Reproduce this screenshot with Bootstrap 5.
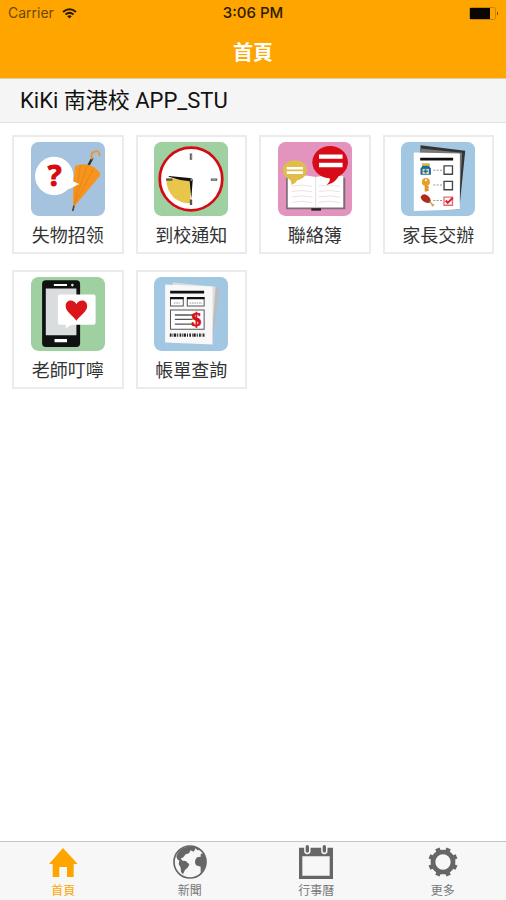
<!DOCTYPE html>
<html lang="zh-Hant">
<head>
<meta charset="utf-8">
<meta name="viewport" content="width=device-width, initial-scale=1">
<title>首頁</title>
<link href="https://cdn.jsdelivr.net/npm/bootstrap@5.3.0/dist/css/bootstrap.min.css" rel="stylesheet">
<style>
  body { font-family: Inter, "Noto Sans CJK TC", sans-serif; background: #fff; color: #111; }
  .app-top { background: #ffa500; border-bottom: 1px solid #e3cda6; }
  .status-bar { height: 26px; font-size: 14px; line-height: 26px; color: #2b1c00; }
  .status-bar .carrier { color: #6b4805; }
  .status-bar .clock-time { font-size: 15px; }
  .status-side { flex: 1 1 0; }
  .page-title { height: 52px; font-size: 20px; line-height: 54px; font-weight: 700; color: #fff; }
  .school-bar { height: 44px; padding: 0 20px; font-size: 22px; line-height: 44px; background: #f5f5f5; border-bottom: 1px solid #e0e0e0; font-family: Roboto, "Noto Sans CJK TC", sans-serif; }
  .tiles { display: grid; grid-template-columns: repeat(4, 1fr); gap: 16px 12px; padding: 12px; }
  .tile { padding-top: 5px; border: 2px solid #ebebeb; color: #333; font-size: 18px; line-height: 32px; }
  .tile svg { width: 74px; height: 74px; margin-bottom: 4px; }
  .tab-bar { background: #f7f7f7; border-top: 1px solid #c4c4c4; }
  .tab-bar a { flex: 1 1 0; padding-top: 3px; color: #777; font-size: 12px; line-height: 18px; }
  .tab-bar a.active { color: #ffa500; }
  .tab-bar svg { width: 34px; height: 34px; margin-bottom: 3px; color: #666; }
  .tab-bar .active svg { color: #ffa500; }
</style>
<script src="https://cdn.jsdelivr.net/npm/bootstrap@5.3.0/dist/js/bootstrap.bundle.min.js"></script>
</head>
<body class="d-flex flex-column min-vh-100">
<header class="app-top">
  <div class="status-bar d-flex align-items-center px-2">
    <div class="status-side d-flex align-items-center gap-2">
      <span class="carrier">Carrier</span>
      <svg width="15" height="11" viewBox="0 0 15 11" fill="none" stroke="#2b1c00" stroke-width="2" aria-hidden="true"><path d="M1 4Q7.500-1.500 14 4M3.500 6.500Q7.500 3.200 11.500 6.500"/><path d="M5.200 8.200Q7.500 6.500 9.800 8.200L7.500 10.500Z" fill="#2b1c00" stroke="none"/></svg>
    </div>
    <span class="clock-time fw-medium">3:06 PM</span>
    <div class="status-side d-flex justify-content-end align-items-center">
      <svg width="30" height="13" viewBox="0 0 30 13" aria-hidden="true"><rect x="1.500" y=".5" width="26" height="12" rx="2" fill="none" stroke="#c98300"/><path d="M2 1h20v11H2z" fill="#0a0600"/><path d="M29 4.500q2 2 0 4z" fill="#5c3b00"/></svg>
    </div>
  </div>
  <h1 class="page-title text-center m-0">首頁</h1>
</header>
<h2 class="school-bar fw-normal m-0">KiKi 南港校 APP_STU</h2>

<main class="flex-grow-1">
  <div class="tiles">
    <a href="#lost" class="tile d-flex flex-column align-items-center text-decoration-none">
      <svg class="flex-shrink-0" viewBox="81 37 220 220" aria-hidden="true">
        <rect x="81" y="37" width="220" height="220" rx="22" fill="#a5c3df"/>
        <path d="M251 108L264 84" stroke="#333" stroke-width="7"/><path d="M262 86Q258 70 268 66Q284 60 285 76" fill="none" stroke="#e59a38" stroke-width="6" stroke-linecap="round"/>
        <path d="M212 108Q230 101 247 104Q269 108 287 129L285 139L207 232Q204 180 212 108Z" fill="#f7941d"/>
        <path d="M228 108L212 210M247 109L210 218M267 117L210 222" fill="none" stroke="#df7f14" stroke-width="2"/><path d="M205 242L209 226" stroke="#554433" stroke-width="5"/>
        <circle cx="150" cy="138" r="57" fill="#fff"/><path d="M198 151L224 162L192 178Z" fill="#fff"/>
        <text x="151" y="169" text-anchor="middle" font-family="Noto Sans, sans-serif" font-weight="700" font-size="86" fill="#dc0810" stroke="#dc0810" stroke-width="3">?</text>
      </svg>
      <span>失物招领</span>
    </a>
    <a href="#arrival" class="tile d-flex flex-column align-items-center text-decoration-none">
      <svg class="flex-shrink-0" viewBox="76 37 220 220" aria-hidden="true">
        <rect x="76" y="37" width="220" height="220" rx="22" fill="#9fd0a1"/>
        <circle cx="186" cy="147" r="93" fill="#fff" stroke="#d50b14" stroke-width="8"/>
        <path d="M187 148L113 144Q111 181 137 204Q158 220 184 219Z" fill="#e7c64b"/>
        <path d="M120 138L181 144Q191 144 191 150L187 206L182 154Q150 150 120 140Z" fill="#111"/>
        <path d="M186 71V90M112 149H131M245 149H264M186 208V224" stroke="#555" stroke-width="7"/>
        <path d="M187 74V87M248 149H261" stroke="#bbb" stroke-width="2"/><circle cx="187" cy="150" r="3" fill="#999"/>
      </svg>
      <span>到校通知</span>
    </a>
    <a href="#contact" class="tile d-flex flex-column align-items-center text-decoration-none">
      <svg class="flex-shrink-0" viewBox="77 37 220 220" aria-hidden="true">
        <rect x="77" y="37" width="220" height="220" rx="22" fill="#e294bf"/>
        <path d="M101 143H277V237H101Z" fill="#806a7a"/><path d="M176 234H205V241H176Z" fill="#222"/>
        <path d="M106 139Q150 132 189 141Q231 132 271 139V232H106Z" fill="#fff"/>
        <path d="M189 141V232" stroke="#e3dede" stroke-width="3"/>
        <g fill="none" stroke="#e5d1d5" stroke-width="2"><path d="M118 168Q150 162 179 169M118 184Q150 178 179 185M118 200Q150 194 179 201M118 216Q150 210 179 217M198 168Q230 162 261 169M198 184Q230 178 261 185M198 200Q230 194 261 201M198 216Q230 210 261 217"/></g>
        <ellipse cx="127" cy="121" rx="36" ry="30" fill="#e0bd4b"/><path d="M108 142Q119 155 116 164Q130 162 136 147Z" fill="#e0bd4b"/>
        <ellipse cx="232" cy="97" rx="53" ry="48" fill="#d70c18"/><path d="M225 135Q239 147 222 165Q252 158 260 130Z" fill="#d70c18"/>
        <path d="M103 111H151V119H103ZM103 124H151V132H103ZM199 74H269V87H199ZM199 99H269V112H199Z" fill="#fff"/>
      </svg>
      <span>聯絡簿</span>
    </a>
    <a href="#tasks" class="tile d-flex flex-column align-items-center text-decoration-none">
      <svg class="flex-shrink-0" viewBox="74 37 220 220" aria-hidden="true">
        <rect x="74" y="37" width="220" height="220" rx="22" fill="#a2c7e3"/>
        <path d="M132 47L265 63L247 239L130 234Z" fill="#333"/><path d="M132 56L256 69L248 202L132 233Z" fill="#777"/>
        <path d="M112 68L249 71V238Q180 240 112 242Z" fill="#fff"/><path d="M131 88H229" stroke="#111" stroke-width="8"/>
        <path d="M137 102H158V109L163 116V134H132V116L137 109Z" fill="#1769a5"/><path d="M136 101H159V108H136Z" fill="#e0b632"/><path d="M138 117H157V132H138Z" fill="#eee0a0"/><path d="M147 118V131M141 124H154" stroke="#277599" stroke-width="5"/>
        <path d="M148 159V184M149 171H156M149 179H156" stroke="#dc971d" stroke-width="7"/><circle cx="148" cy="156" r="12" fill="#e4a12a"/><circle cx="148" cy="151" r="3" fill="#fff"/>
        <path d="M132 201Q138 188 151 195Q165 203 162 218Q139 220 132 201Z" fill="#aa2d19"/><path d="M159 214L170 226M166 228L172 222" stroke="#d5a467" stroke-width="5"/>
        <path d="M170 121H197M170 165H197M170 211H197" stroke="#999" stroke-width="3" stroke-dasharray="6 4"/>
        <g fill="#fff" stroke-width="4"><path d="M202 108H227V133H202ZM202 154H227V179H202Z" stroke="#444"/><path d="M202 201H227V225H202Z" stroke="#e66b72"/></g><path d="M207 211L213 218L228 203" fill="none" stroke="#d81f2a" stroke-width="6"/>
      </svg>
      <span>家長交辦</span>
    </a>
    <a href="#reminders" class="tile d-flex flex-column align-items-center text-decoration-none">
      <svg class="flex-shrink-0" viewBox="81 38 220 220" aria-hidden="true">
        <rect x="81" y="38" width="220" height="220" rx="22" fill="#9fd0a1"/>
        <rect x="114" y="48" width="113" height="198" rx="11" fill="#111"/><path d="M125 72H216V211H125Z" fill="#dadddd"/>
        <path d="M149 59H188V65H149ZM151 222H188V232H151Z" fill="#fff"/><circle cx="204" cy="62" r="4" fill="#ddd"/>
        <path d="M167 90H268Q273 90 273 96V174Q273 180 267 180H202L184 190L185 180H167Q161 180 161 174V96Q161 90 167 90Z" fill="#fff"/>
        <path d="M216 168C205 151 184 142 184 124C184 105 208 102 216 119C224 102 248 105 248 124C248 142 227 151 216 168Z" fill="#dc151b"/>
      </svg>
      <span>老師叮嚀</span>
    </a>
    <a href="#bills" class="tile d-flex flex-column align-items-center text-decoration-none">
      <svg class="flex-shrink-0" viewBox="76 38 220 220" aria-hidden="true">
        <rect x="76" y="38" width="220" height="220" rx="22" fill="#a2c7e3"/>
        <path d="M132 57L271 73L248 241L132 232Z" fill="#bcbcbc"/><path d="M132 54L259 67L246 235L132 228Z" fill="#ddd"/>
        <path d="M109 60L250 66V239L109 233Z" fill="#f8f8f8"/><path d="M124 83H225" stroke="#111" stroke-width="8"/>
        <g fill="#fff" stroke="#555" stroke-width="3"><path d="M125 99H163V124H125ZM175 99H225V124H175ZM125 136H225V193H125Z"/></g>
        <path d="M124 101H164M174 101H226" stroke="#111" stroke-width="7"/><path d="M135 115H153M182 115H219" stroke="#999" stroke-width="3" stroke-dasharray="5 2"/>
        <path d="M138 151H197M138 164H191M138 178H197" stroke="#555" stroke-width="4"/>
        <text x="202" y="185" text-anchor="middle" font-family="Liberation Serif, serif" font-weight="700" font-size="58" fill="#d70c13" stroke="#d70c13" stroke-width="2">$</text>
        <path d="M123 211H226" stroke="#222" stroke-width="10" stroke-dasharray="5 3 2 2 7 3 3 4"/>
      </svg>
      <span>帳單查詢</span>
    </a>
  </div>
</main>

<nav class="tab-bar d-flex sticky-bottom" aria-label="主選單">
  <a href="#home" class="active d-flex flex-column align-items-center text-decoration-none" aria-current="page">
    <svg class="flex-shrink-0" viewBox="139 31 102 102" fill="currentColor" aria-hidden="true"><path d="M190 40L234 88H222V127H202V97H179V127H159V88H148Z"/></svg>
    <span>首頁</span>
  </a>
  <a href="#news" class="d-flex flex-column align-items-center text-decoration-none">
    <svg class="flex-shrink-0" viewBox="519 31 102 102" fill="currentColor" aria-hidden="true"><circle cx="570" cy="82" r="48" fill="none" stroke="currentColor" stroke-width="5"/><path d="M529 65Q535 47 551 39L573 34Q593 35 602 46L592 47L587 41L581 51L572 47L567 56L557 59L550 68L542 72L548 78L557 79L568 89L564 98L555 106L549 119L543 112L542 99L536 88L538 78L532 74ZM586 75L591 68L602 66L602 58L609 56Q618 68 618 83L613 101L602 116L602 96L588 92L585 84Z"/></svg>
    <span>新聞</span>
  </a>
  <a href="#calendar" class="d-flex flex-column align-items-center text-decoration-none">
    <svg class="flex-shrink-0" viewBox="141 31 102 102" fill="currentColor" aria-hidden="true"><path fill-rule="evenodd" d="M141 39H243V133H141ZM151 65V123H233V65Z"/><g stroke-linecap="round"><path d="M166 35V49M217 35V49" stroke="#f7f7f7" stroke-width="19"/><path d="M166 36V49M217 36V49" stroke="currentColor" stroke-width="10"/></g></svg>
    <span>行事曆</span>
  </a>
  <a href="#more" class="d-flex flex-column align-items-center text-decoration-none">
    <svg class="flex-shrink-0" viewBox="520 31 102 102" fill="currentColor" aria-hidden="true"><circle cx="571" cy="82" r="30" fill="none" stroke="currentColor" stroke-width="14"/><g stroke="currentColor" stroke-width="14"><path id="tooth" d="M571 38V50" transform="rotate(22.500 571 82)"/><use href="#tooth" transform="rotate(45 571 82)"/><use href="#tooth" transform="rotate(90 571 82)"/><use href="#tooth" transform="rotate(135 571 82)"/><use href="#tooth" transform="rotate(180 571 82)"/><use href="#tooth" transform="rotate(225 571 82)"/><use href="#tooth" transform="rotate(270 571 82)"/><use href="#tooth" transform="rotate(315 571 82)"/></g></svg>
    <span>更多</span>
  </a>
</nav>
</body>
</html>
